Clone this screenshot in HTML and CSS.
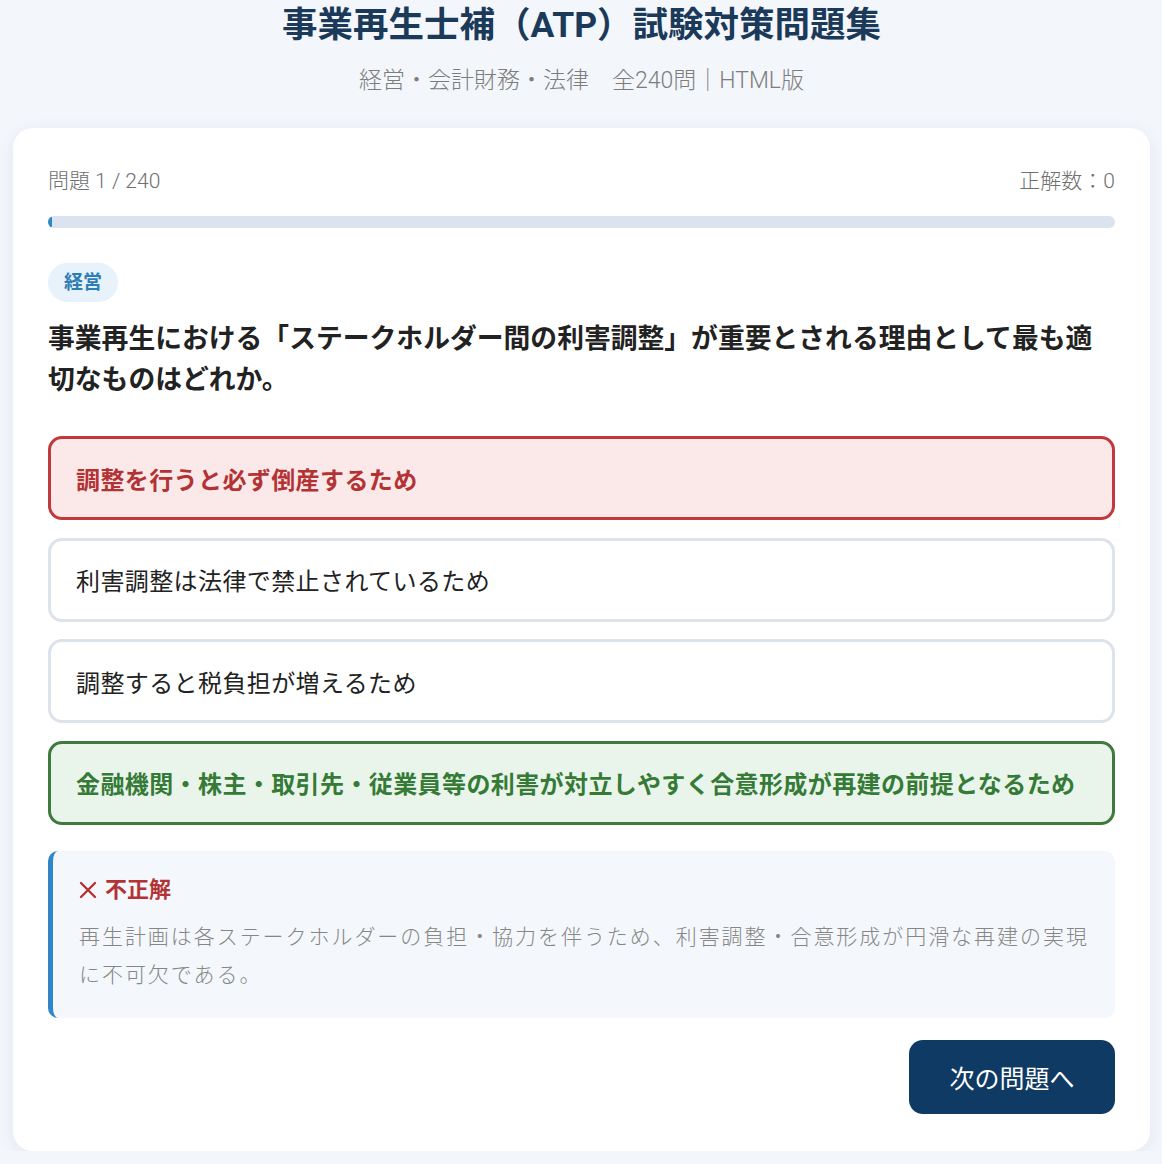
FILE: index.html
```html
<!DOCTYPE html>
<html lang="ja">
<head>
    <meta charset="utf-8">
    <title>事業再生士補（ATP）試験対策問題集</title>
    <link rel="stylesheet" href="styles.css">
</head>
<body>
    <header class="header">
        <h1>事業再生士補（ATP）試験対策問題集</h1>
        <p class="subtitle">経営・会計財務・法律　全240問｜HTML版</p>
    </header>

    <main class="card">
        <div class="progress-info">
            <span>問題 1 / 240</span>
            <span>正解数：0</span>
        </div>
        <div class="progress-bar">
            <div class="progress-fill" style="width: 0.42%;"></div>
        </div>

        <span class="category">経営</span>

        <p class="question">事業再生における「ステークホルダー間の利害調整」が重要とされる理由として最も適切なものはどれか。</p>

        <div class="options">
            <button class="option wrong">調整を行うと必ず倒産するため</button>
            <button class="option">利害調整は法律で禁止されているため</button>
            <button class="option">調整すると税負担が増えるため</button>
            <button class="option correct">金融機関・株主・取引先・従業員等の利害が対立しやすく合意形成が再建の前提となるため</button>
        </div>

        <div class="explanation">
            <div class="result">
                <svg class="result-icon" width="18" height="18" viewBox="0 0 18 18">
                    <path d="M2 2 L16 16 M16 2 L2 16" stroke="currentColor" stroke-width="2.4" stroke-linecap="round"/>
                </svg>
                <span>不正解</span>
            </div>
            <p class="explanation-text">再生計画は各ステークホルダーの負担・協力を伴うため、利害調整・合意形成が円滑な再建の実現に不可欠である。</p>
        </div>

        <div class="actions">
            <button class="next-btn">次の問題へ</button>
        </div>
    </main>
</body>
</html>
```

FILE: styles.css
```css
body {
    margin: 0;
    padding: 0 12px 0 13px;
    background: #f3f6fb;
    font-family: Roboto, "Noto Sans CJK JP", sans-serif;
    color: #222;
}
.header {
    text-align: center;
    padding-top: 3px;
}
.header h1 {
    margin: 0;
    font-size: 35.5px;
    line-height: 44px;
    font-weight: 700;
    color: #1b3a5a;
}
.subtitle {
    margin: 18px 0 31px;
    font-size: 23px;
    line-height: 32px;
    font-weight: 300;
    color: #7d7d7d;
}
.card {
    display: block;
    background: #fff;
    border-radius: 20px;
    padding: 39px 35px 37px;
    box-shadow: 0 4px 18px rgba(30, 60, 100, 0.07);
}
.progress-info {
    display: flex;
    justify-content: space-between;
    font-size: 21px;
    line-height: 28px;
    font-weight: 300;
    color: #6f6f6f;
}
.progress-bar {
    margin-top: 21px;
    height: 12px;
    background: #dbe3ee;
    border-radius: 6px;
    overflow: hidden;
}
.progress-fill {
    height: 100%;
    background: #2f86c9;
    border-radius: 6px;
}
.category {
    display: inline-block;
    margin-top: 35px;
    padding: 0 16px;
    line-height: 39px;
    font-size: 19px;
    font-weight: 700;
    color: #2f7db5;
    background: #e7f2fb;
    border-radius: 20px;
}
.question {
    margin: 17px 0 35px;
    font-size: 26.8px;
    line-height: 41px;
    font-weight: 700;
    color: #222;
}
.options {
    display: flex;
    flex-direction: column;
    gap: 17.5px;
}
.option {
    display: block;
    width: 100%;
    height: 84px;
    box-sizing: border-box;
    text-align: left;
    padding: 0 25px;
    font-family: inherit;
    font-size: 24px;
    letter-spacing: 0.4px;
    color: #222;
    background: #fff;
    border: 3px solid #dde3ea;
    border-radius: 14px;
    cursor: pointer;
}
.option.wrong {
    border-color: #c0393c;
    background: #fbe9e9;
    color: #b33335;
    font-weight: 700;
}
.option.correct {
    border-color: #3f7a3c;
    background: #e9f5ea;
    color: #357a37;
    font-weight: 700;
}
.explanation {
    margin-top: 26px;
    padding: 24px 20px 24px 26px;
    background: #f4f8fc;
    border-left: 5px solid #2f86c9;
    border-radius: 10px;
}
.result {
    display: flex;
    align-items: center;
    gap: 8px;
    font-size: 22px;
    line-height: 30px;
    font-weight: 700;
    color: #b33335;
}
.explanation-text {
    margin: 13px 0 0;
    font-size: 21px;
    line-height: 38px;
    letter-spacing: 1.95px;
    font-weight: 300;
    color: #868686;
}
.actions {
    display: flex;
    justify-content: flex-end;
    margin-top: 22px;
}
.next-btn {
    width: 206px;
    height: 74px;
    font-family: inherit;
    font-size: 25px;
    color: #fff;
    background: #0f3a63;
    border: none;
    border-radius: 14px;
    cursor: pointer;
}
```
